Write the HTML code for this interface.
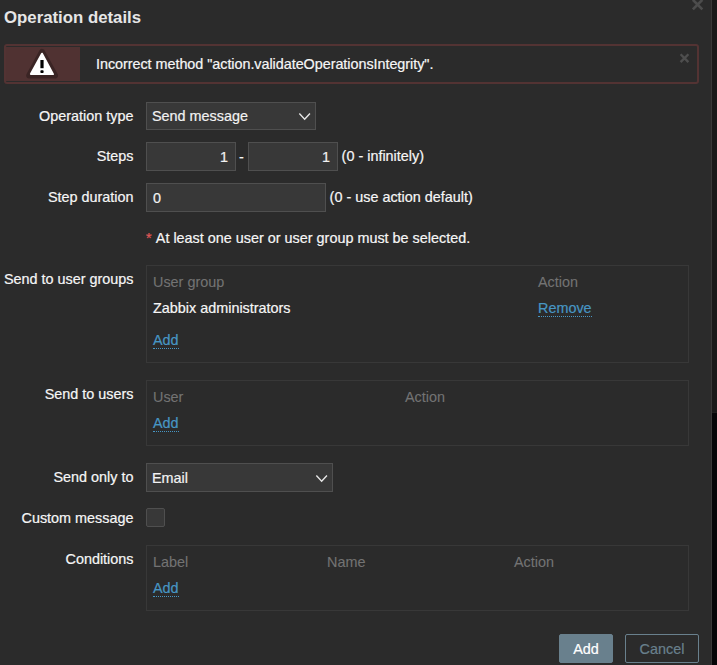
<!DOCTYPE html>
<html lang="en">
<head>
<meta charset="utf-8">
<title>Operation details</title>
<style>
*{box-sizing:border-box;margin:0;padding:0}
html,body{width:717px;height:665px;overflow:hidden;background:#2b2b2b}
body{position:relative;font-family:"Liberation Sans",Arial,sans-serif;font-size:14.4px;color:#f6f6f6;line-height:17px;-webkit-text-stroke:0.2px}
.abs{position:absolute;white-space:nowrap}
.side-top{left:712px;top:0;width:5px;height:413px;background:#191919}
.side-bot{left:712px;top:413px;width:5px;height:252px;background:#050608}
.side-sep{left:712px;top:412px;width:5px;height:1px;background:#1f1f1f}
.dlg-border{left:711px;top:0;width:1px;height:665px;background:#383838}
h4{-webkit-text-stroke:0;font-size:16.8px;font-weight:bold;left:4px;top:8px;line-height:20px;color:#e6e6e6}
.msg{left:4px;top:44px;width:695px;height:40px;border:2px solid #533333;border-radius:3px}
.msg .ico{position:absolute;left:0;top:1px;width:74px;height:34px;background:#503232}
.msg .txt{position:absolute;left:90px;top:10px;line-height:17px;letter-spacing:-0.045px}
label.abs{text-align:right;width:133.5px;left:0}
.inp{font:inherit;height:29px;background:#383838;border:1px solid #4f4f4f;color:#f2f2f2;padding:0 6px;line-height:28px}
.box{border:1px solid #383838}
.th{color:#737373;-webkit-text-stroke:0.1px}
a{color:#4796c4;text-decoration:none;border-bottom:1px dotted #4796c4;line-height:17px;display:inline-block;height:17px}
.btn{font:inherit;-webkit-text-stroke:inherit;padding:0;cursor:pointer;height:29px;border:1px solid #69808d;border-radius:2px;text-align:center;line-height:29px}
.btn.main{background:#69808d;color:#fff}
.btn.alt{background:transparent;color:#69808d}
</style>
</head>
<body>
<div class="abs side-top"></div><div class="abs side-bot"></div><div class="abs side-sep"></div><div class="abs dlg-border"></div>

<h4 class="abs">Operation details</h4>
<svg class="abs" style="left:690px;top:0" width="16" height="12" viewBox="0 0 16 12"><path d="M2.85 -0.15 L12.35 9.35 M12.35 -0.15 L2.85 9.35" stroke="#4c4c4c" stroke-width="2.7" fill="none"/></svg>

<div class="abs msg">
  <div class="ico">
    <svg style="position:absolute;left:0;top:0" width="74" height="34" viewBox="0 0 74 34"><path d="M36 5 L49 28.5 H23.2 Z" fill="#3a2424" stroke="#3a2424" stroke-width="6" stroke-linejoin="round"/><path d="M36 6.7 L47 27.1 H24.9 Z" fill="#fff" stroke="#fff" stroke-width="2" stroke-linejoin="round"/><rect x="34.4" y="13" width="3.2" height="8.2" fill="#000"/><rect x="34.4" y="23.2" width="3.2" height="2.8" rx="0.8" fill="#000"/></svg>
  </div>
  <div class="txt">Incorrect method "action.validateOperationsIntegrity".</div>
  <svg style="position:absolute;left:672px;top:6px" width="12" height="12" viewBox="0 0 12 12"><path d="M2.6 2.25 L10.4 10.05 M10.4 2.25 L2.6 10.05" stroke="#4e4e4e" stroke-width="2.4" fill="none"/></svg>
</div>

<label class="abs" style="top:108px">Operation type</label>
<div class="abs inp" style="left:146px;top:102px;width:170px;height:28px;line-height:26px;padding-left:5px">Send message
  <svg style="position:absolute;left:150px;top:8px" width="16" height="12" viewBox="0 0 16 12"><path d="M2.35 2.5 L7.65 8.2 L12.95 2.5" stroke="#e6e6e6" stroke-width="1.4" fill="none"/></svg>
</div>

<label class="abs" style="top:148px">Steps</label>
<div class="abs inp" style="left:146px;top:142px;width:90px;text-align:right;padding-right:7px">1</div>
<div class="abs" style="left:239px;top:149px">-</div>
<div class="abs inp" style="left:248px;top:142px;width:90px;text-align:right;padding-right:7px">1</div>
<div class="abs" style="left:341.6px;top:148px">(0 - infinitely)</div>

<label class="abs" style="top:189px">Step duration</label>
<div class="abs inp" style="left:146px;top:183px;width:180px">0</div>
<div class="abs" style="left:329.6px;top:189px">(0 - use action default)</div>

<div class="abs" style="left:146px;top:230px"><span style="color:#e45959;margin-right:1px">*</span> At least one user or user group must be selected.</div>

<label class="abs" style="top:271px">Send to user groups</label>
<div class="abs box" style="left:146px;top:265px;width:543px;height:98px">
  <div class="abs th" style="left:6px;top:8px">User group</div>
  <div class="abs th" style="left:391px;top:8px">Action</div>
  <div class="abs" style="left:6px;top:34px">Zabbix administrators</div>
  <div class="abs" style="left:391px;top:34px"><a>Remove</a></div>
  <div class="abs" style="left:6px;top:66px"><a>Add</a></div>
</div>

<label class="abs" style="top:386px">Send to users</label>
<div class="abs box" style="left:146px;top:380px;width:543px;height:66px">
  <div class="abs th" style="left:6px;top:8px">User</div>
  <div class="abs th" style="left:258px;top:8px">Action</div>
  <div class="abs" style="left:6px;top:34px"><a>Add</a></div>
</div>

<label class="abs" style="top:469px">Send only to</label>
<div class="abs inp" style="left:146px;top:463px;width:187px;height:29px;line-height:27px;padding:1px 6px 0 5px">Email
  <svg style="position:absolute;left:167px;top:9px" width="16" height="12" viewBox="0 0 16 12"><path d="M2.35 2.5 L7.65 8.2 L12.95 2.5" stroke="#e6e6e6" stroke-width="1.4" fill="none"/></svg>
</div>

<label class="abs" style="top:510px">Custom message</label>
<div class="abs" style="left:146px;top:508px;width:19px;height:19px;background:#383838;border:1px solid #4f4f4f;border-radius:2px"></div>

<label class="abs" style="top:551px">Conditions</label>
<div class="abs box" style="left:146px;top:545px;width:543px;height:66px">
  <div class="abs th" style="left:6px;top:8px">Label</div>
  <div class="abs th" style="left:180px;top:8px">Name</div>
  <div class="abs th" style="left:367px;top:8px">Action</div>
  <div class="abs" style="left:6px;top:34px"><a>Add</a></div>
</div>

<button type="button" class="abs btn main" style="left:559px;top:634px;width:54px">Add</button>
<button type="button" class="abs btn alt" style="left:625px;top:634px;width:74px">Cancel</button>
</body>
</html>
